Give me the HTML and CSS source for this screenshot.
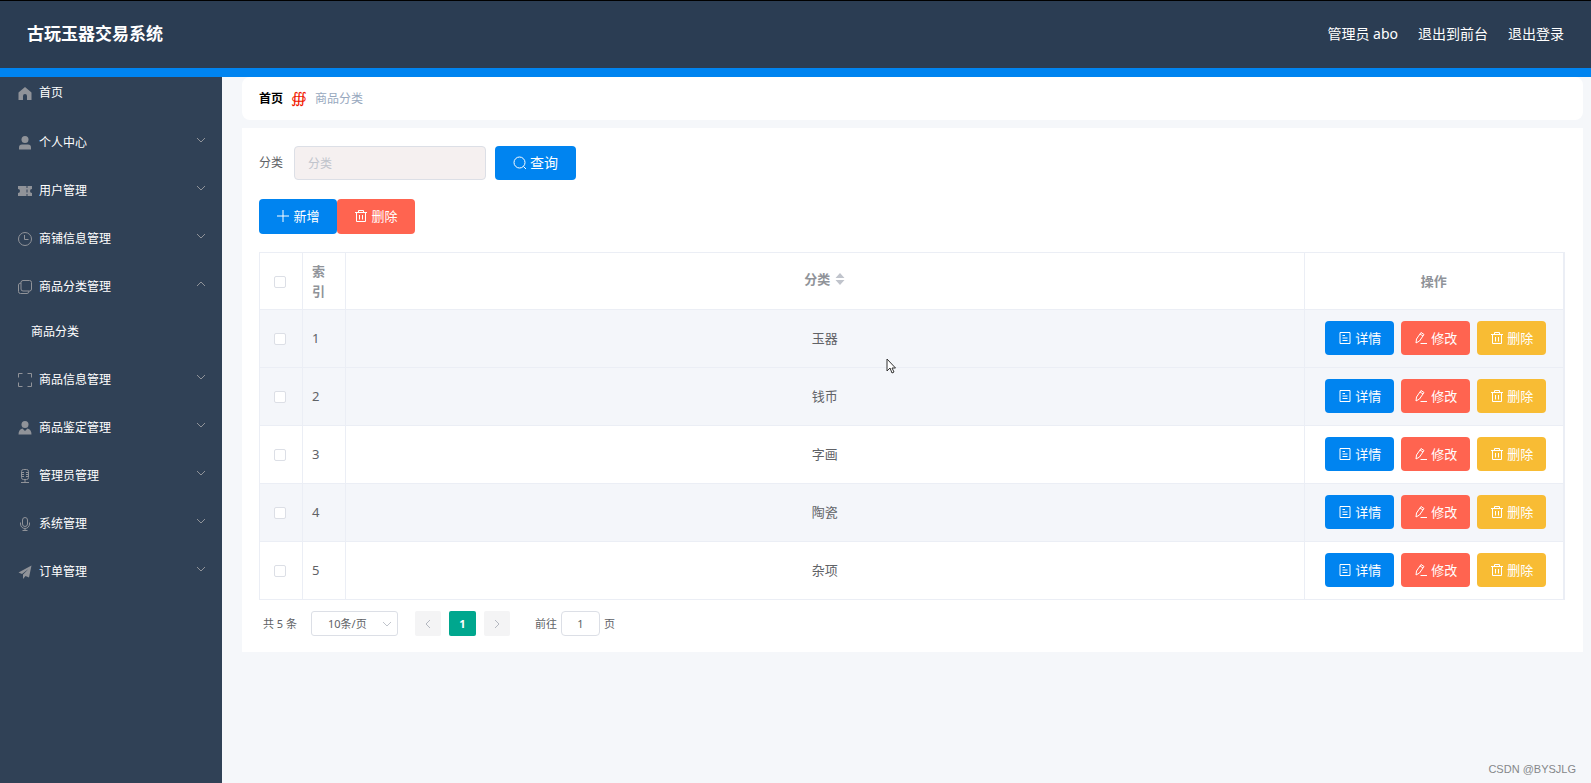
FILE: index.html
```html
<!DOCTYPE html>
<html lang="zh-CN">
<head>
<meta charset="utf-8">
<title>古玩玉器交易系统</title>
<link rel="stylesheet" href="styles.css">
</head>
<body>
<svg class="sprite" aria-hidden="true">
  <symbol id="arrow" viewBox="0 0 10 10"><path d="M1 3l4 4 4-4"/></symbol>
  <symbol id="trash" viewBox="0 0 14 14"><path d="M1 3.500h12M4.500 3.500V1.500h5v2M2.500 3.500v9h9v-9M5.500 6v4.500M8.500 6v4.500"/></symbol>
  <symbol id="doc" viewBox="0 0 14 14"><path d="M2 1.500h10v11H2zM4.500 4.500h2.500M4.500 7h5M4.500 9.500h5"/></symbol>
  <symbol id="edit" viewBox="0 0 14 14"><path d="M2 12l.5-4 4.500-6.500 3 2-4.500 6.500zM6 3l3 2M6.500 12.500h6.500"/></symbol>
</svg>
<header class="header">
  <h1 class="brand">古玩玉器交易系统</h1>
  <nav class="user-nav">
    <span>管理员 abo</span>
    <a href="#">退出到前台</a>
    <a href="#">退出登录</a>
  </nav>
</header>
<div class="layout">
  <aside class="sidebar">
    <nav>
      <a class="item home" href="#"><svg class="icon solid" viewBox="0 0 16 16"><path d="M8 2L1.500 7.500V15h4.500v-4a2 2 0 0 1 4 0v4h4.500V7.500z"/></svg>首页</a>
      <a class="item" href="#"><svg class="icon solid" viewBox="0 0 16 16"><circle cx="8" cy="4.500" r="3.500"/><path d="M2 14.500v-2q0-3 3-3h6q3 0 3 3v2z"/></svg>个人中心<svg class="arrow"><use href="#arrow"/></svg></a>
      <a class="item" href="#"><svg class="icon solid" viewBox="0 0 16 16"><path d="M1 3h8.500v2h1V3H15v3a2 2 0 0 0 0 4v3h-4.500v-2h-1v2H1v-3a2 2 0 0 0 0-4zM9.500 6.500v3h1v-3z" fill-rule="evenodd"/></svg>用户管理<svg class="arrow"><use href="#arrow"/></svg></a>
      <a class="item" href="#"><svg class="icon" viewBox="0 0 16 16"><circle cx="8" cy="8" r="6.500"/><path d="M7.500 4v4.500h4"/></svg>商铺信息管理<svg class="arrow"><use href="#arrow"/></svg></a>
      <a class="item" href="#"><svg class="icon" viewBox="0 0 16 16"><rect x="4" y="1.500" width="10.500" height="10.500" rx="2"/><path d="M4 4Q1.500 4 1.500 6v6.500q0 2 2 2H10q2 0 2-2.500"/></svg>商品分类管理<svg class="arrow up"><use href="#arrow"/></svg></a>
      <div class="submenu"><a href="#">商品分类</a></div>
      <a class="item" href="#"><svg class="icon" viewBox="0 0 16 16"><path d="M1.500 5.500v-4h4M10.500 1.500h4v4M14.500 10.500v4h-4M5.500 14.500h-4v-4"/></svg>商品信息管理<svg class="arrow"><use href="#arrow"/></svg></a>
      <a class="item" href="#"><svg class="icon solid" viewBox="0 0 16 16"><circle cx="8" cy="4.500" r="3.500"/><path d="M1.500 14.500q0-5 4-6L8 11l2.500-2.500q4 1 4 6z"/></svg>商品鉴定管理<svg class="arrow"><use href="#arrow"/></svg></a>
      <a class="item" href="#"><svg class="icon" viewBox="0 0 16 16"><rect x="4.500" y="1.500" width="7" height="10" rx="2"/><path d="M4.500 4.500h2.500M9 4.500h2.500M4.500 6.500h2.500M9 6.500h2.500M4.500 8.500h2.500M9 8.500h2.500M8 11.500v3M4 14.500h8"/></svg>管理员管理<svg class="arrow"><use href="#arrow"/></svg></a>
      <a class="item" href="#"><svg class="icon" viewBox="0 0 16 16"><rect x="5.500" y="1.500" width="5" height="9" rx="2.500"/><path d="M3.500 6.500v1.500a4.500 4.500 0 0 0 9 0V6.500M8 12.500v2M5.500 14.500h5"/></svg>系统管理<svg class="arrow"><use href="#arrow"/></svg></a>
      <a class="item" href="#"><svg class="icon solid" viewBox="0 0 16 16"><path d="M14.500 1.500L1.500 8.500 5 10l6.500-5L6 10.500V15l2.500-3 3.500 1.500z"/></svg>订单管理<svg class="arrow"><use href="#arrow"/></svg></a>
    </nav>
  </aside>
  <main class="main">
    <nav class="breadcrumb">
      <a href="#">首页</a><span class="sep">∰</span><span>商品分类</span>
    </nav>
    <section class="panel">
      <form class="search">
        <label for="category">分类</label>
        <input id="category" type="text" placeholder="分类">
        <button class="btn blue query" type="button"><svg class="glyph" viewBox="0 0 14 14"><circle cx="6.500" cy="6.500" r="5.500"/><path d="M10.500 10.500l2.500 2.500"/></svg>查询</button>
      </form>
      <div class="actions">
        <button class="btn blue" type="button"><svg class="glyph" viewBox="0 0 14 14"><path d="M7 1v12M1 7h12"/></svg>新增</button>
        <button class="btn red" type="button"><svg class="glyph"><use href="#trash"/></svg>删除</button>
      </div>
      <table class="grid">
        <colgroup><col class="c-check"><col class="c-index"><col><col class="c-ops"></colgroup>
        <thead>
          <tr><th class="check"><input type="checkbox" aria-label="全选"></th><th class="index">索引</th><th class="sortable">分类<svg class="sort" viewBox="0 0 10 12"><path d="M5 0l4.500 5h-9zM5 12l4.500-5h-9z"/></svg></th><th>操作</th></tr>
        </thead>
        <tbody>
          <tr class="shade"><td class="check"><input type="checkbox" aria-label="选择 1"></td><td class="index">1</td><td>玉器</td><td><div class="ops"><button class="btn blue" type="button"><svg class="glyph"><use href="#doc"/></svg>详情</button><button class="btn red" type="button"><svg class="glyph"><use href="#edit"/></svg>修改</button><button class="btn gold" type="button"><svg class="glyph"><use href="#trash"/></svg>删除</button></div></td></tr>
          <tr class="shade"><td class="check"><input type="checkbox" aria-label="选择 2"></td><td class="index">2</td><td>钱币</td><td><div class="ops"><button class="btn blue" type="button"><svg class="glyph"><use href="#doc"/></svg>详情</button><button class="btn red" type="button"><svg class="glyph"><use href="#edit"/></svg>修改</button><button class="btn gold" type="button"><svg class="glyph"><use href="#trash"/></svg>删除</button></div></td></tr>
          <tr><td class="check"><input type="checkbox" aria-label="选择 3"></td><td class="index">3</td><td>字画</td><td><div class="ops"><button class="btn blue" type="button"><svg class="glyph"><use href="#doc"/></svg>详情</button><button class="btn red" type="button"><svg class="glyph"><use href="#edit"/></svg>修改</button><button class="btn gold" type="button"><svg class="glyph"><use href="#trash"/></svg>删除</button></div></td></tr>
          <tr class="shade"><td class="check"><input type="checkbox" aria-label="选择 4"></td><td class="index">4</td><td>陶瓷</td><td><div class="ops"><button class="btn blue" type="button"><svg class="glyph"><use href="#doc"/></svg>详情</button><button class="btn red" type="button"><svg class="glyph"><use href="#edit"/></svg>修改</button><button class="btn gold" type="button"><svg class="glyph"><use href="#trash"/></svg>删除</button></div></td></tr>
          <tr><td class="check"><input type="checkbox" aria-label="选择 5"></td><td class="index">5</td><td>杂项</td><td><div class="ops"><button class="btn blue" type="button"><svg class="glyph"><use href="#doc"/></svg>详情</button><button class="btn red" type="button"><svg class="glyph"><use href="#edit"/></svg>修改</button><button class="btn gold" type="button"><svg class="glyph"><use href="#trash"/></svg>删除</button></div></td></tr>
        </tbody>
      </table>
      <div class="pager">
        <span class="total">共 5 条</span>
        <span class="size"><select aria-label="每页条数"><option>10条/页</option></select><svg class="arrow"><use href="#arrow"/></svg></span>
        <div class="pages">
          <button type="button" aria-label="上一页"><svg class="arrow left"><use href="#arrow"/></svg></button>
          <button type="button" class="current">1</button>
          <button type="button" aria-label="下一页"><svg class="arrow right"><use href="#arrow"/></svg></button>
        </div>
        <label class="jump">前往<input type="text" value="1">页</label>
      </div>
    </section>
  </main>
</div>
<svg class="cursor" viewBox="0 0 10 16" aria-hidden="true"><path d="M1 1v12l3-3 2 5 2-1-2-4h3.500z"/></svg>
<div class="watermark">CSDN @BYSJLG</div>
</body>
</html>
```

FILE: styles.css
```css
* { box-sizing: border-box; }
body {
  margin: 0;
  min-height: 100vh;
  display: flex;
  flex-direction: column;
  background: #f5f7fa;
  color: #606266;
  font: 13px/20px "Noto Sans", "Noto Sans CJK SC", sans-serif;
}
a { color: inherit; text-decoration: none; }
button, input, select { font: inherit; color: inherit; margin: 0; }
svg { fill: none; stroke: currentColor; flex: none; }
.sprite { position: absolute; width: 0; height: 0; }

.header {
  display: flex;
  align-items: center;
  justify-content: space-between;
  height: 77px;
  padding: 0 27px 2px;
  background: #2b3d53;
  border-top: 1px solid #000;
  border-bottom: 9px solid #0084f0;
  color: #fff;
}
.brand { margin: 0; font-size: 17px; font-weight: 700; }
.user-nav { display: flex; gap: 20px; font-size: 14px; }

.layout { flex: 1; display: flex; }
.sidebar {
  flex: none;
  width: 222px;
  background: #304156;
  color: #fff;
  font-size: 12px;
}
.item {
  display: flex;
  align-items: center;
  height: 48px;
  padding: 0 16px 0 17px;
}
.item.home { height: 42px; padding-bottom: 10px; }
.icon { width: 16px; height: 16px; margin-right: 6px; color: #909399; }
.icon.solid { fill: currentColor; stroke: none; }
.arrow { width: 10px; height: 10px; color: #909399; }
.item .arrow { margin: 0 0 6px auto; }
.arrow.up { transform: rotate(180deg); }
.submenu { padding: 1px 0 4px; }
.submenu a { display: block; padding-left: 31px; line-height: 40px; }

.main { flex: 1; min-width: 0; padding: 0 8px 0 20px; }
.breadcrumb {
  display: flex;
  align-items: center;
  gap: 8px;
  height: 43px;
  margin-bottom: 8px;
  padding: 0 17px;
  border-radius: 8px;
  background: #fff;
  color: #97a8be;
  font-size: 12px;
}
.breadcrumb a { color: #000; font-weight: 700; }
.sep { color: #f01800; font-size: 15px; line-height: 16px; padding-bottom: 3px; }

.panel { padding: 18px 18px 16px 17px; background: #fff; }
.search { display: flex; align-items: center; height: 34px; font-size: 12px; }
.search label { margin-right: 11px; }
.search input {
  width: 192px;
  height: 34px;
  padding: 0 13px;
  border: 1px solid #dcdfe6;
  border-radius: 4px;
  background: #f5f0f0;
}
.search input::placeholder { color: #c0c4cc; }
.btn {
  display: inline-flex;
  align-items: center;
  justify-content: center;
  gap: 3px;
  width: 69px;
  height: 34px;
  padding: 0;
  border: 0;
  border-radius: 4px;
  color: #fff;
  font-size: 13px;
}
.btn.query { width: 81px; margin-left: 9px; font-size: 14px; }
.blue { background: #0084f0; }
.red { background: #ff6450; }
.gold { background: #f8bc34; }
.glyph { width: 14px; height: 14px; }
.actions { display: flex; margin: 19px 0 18px; }
.actions .btn { width: 78px; height: 35px; padding-bottom: 1px; }

.grid {
  width: 100%;
  table-layout: fixed;
  border-collapse: collapse;
  border: 1px solid #ebeef5;
  border-right-width: 2px;
  text-align: center;
}
.c-check { width: 43px; }
.c-index { width: 43px; }
.c-ops { width: 260px; }
.grid th, .grid td { height: 58px; padding: 0 0 2px; border: 1px solid #ebeef5; }
.grid th { height: 57px; padding: 0; color: #909399; font-weight: 700; }
.grid .index { padding-left: 9px; padding-right: 9px; text-align: left; }
.grid .check { padding-right: 3px; }
.grid .sortable { padding-bottom: 5px; }
.shade { background: #f4f6fa; }
.grid input {
  appearance: none;
  width: 12px;
  height: 12px;
  border: 1px solid #dcdfe6;
  border-radius: 2px;
  background: #fff;
  vertical-align: middle;
}
.sort { width: 10px; height: 12px; margin-left: 5px; fill: #c0c4cc; stroke: none; vertical-align: -1px; }
.ops { display: flex; justify-content: center; gap: 7px; padding-left: 4px; }

.pager { display: flex; align-items: center; margin-top: 11px; height: 25px; padding-left: 4px; font-size: 11px; }
.size { position: relative; display: flex; width: 87px; margin: 0 17px 0 14px; }
.size select {
  appearance: none;
  width: 100%;
  height: 25px;
  padding: 0 16px;
  border: 1px solid #dcdfe6;
  border-radius: 3px;
  background: #fff;
}
.size .arrow { position: absolute; right: 6px; top: 8px; color: #c0c4cc; }
.pages { display: flex; gap: 8px; }
.pages button {
  display: flex;
  align-items: center;
  justify-content: center;
  width: 26px;
  height: 25px;
  padding: 0;
  border: 0;
  border-radius: 2px;
  background: #f4f4f5;
  color: #c0c4cc;
}
.pages .arrow { color: #b4b8c0; }
.pages .current { width: 27px; background: #00a78e; color: #fff; font-weight: 700; }
.arrow.left { transform: rotate(90deg); }
.arrow.right { transform: rotate(-90deg); }
.jump { display: flex; align-items: center; gap: 4px; margin-left: 25px; }
.jump input {
  width: 39px;
  height: 25px;
  padding: 0;
  border: 1px solid #dcdfe6;
  border-radius: 4px;
  text-align: center;
}

.cursor { position: absolute; left: 886px; top: 358px; width: 10px; height: 16px; fill: #fff; stroke: #333; }
.watermark {
  position: absolute;
  right: 15px;
  bottom: 4px;
  color: #85878a;
  font: 11px/20px "Liberation Sans", sans-serif;
}
```
